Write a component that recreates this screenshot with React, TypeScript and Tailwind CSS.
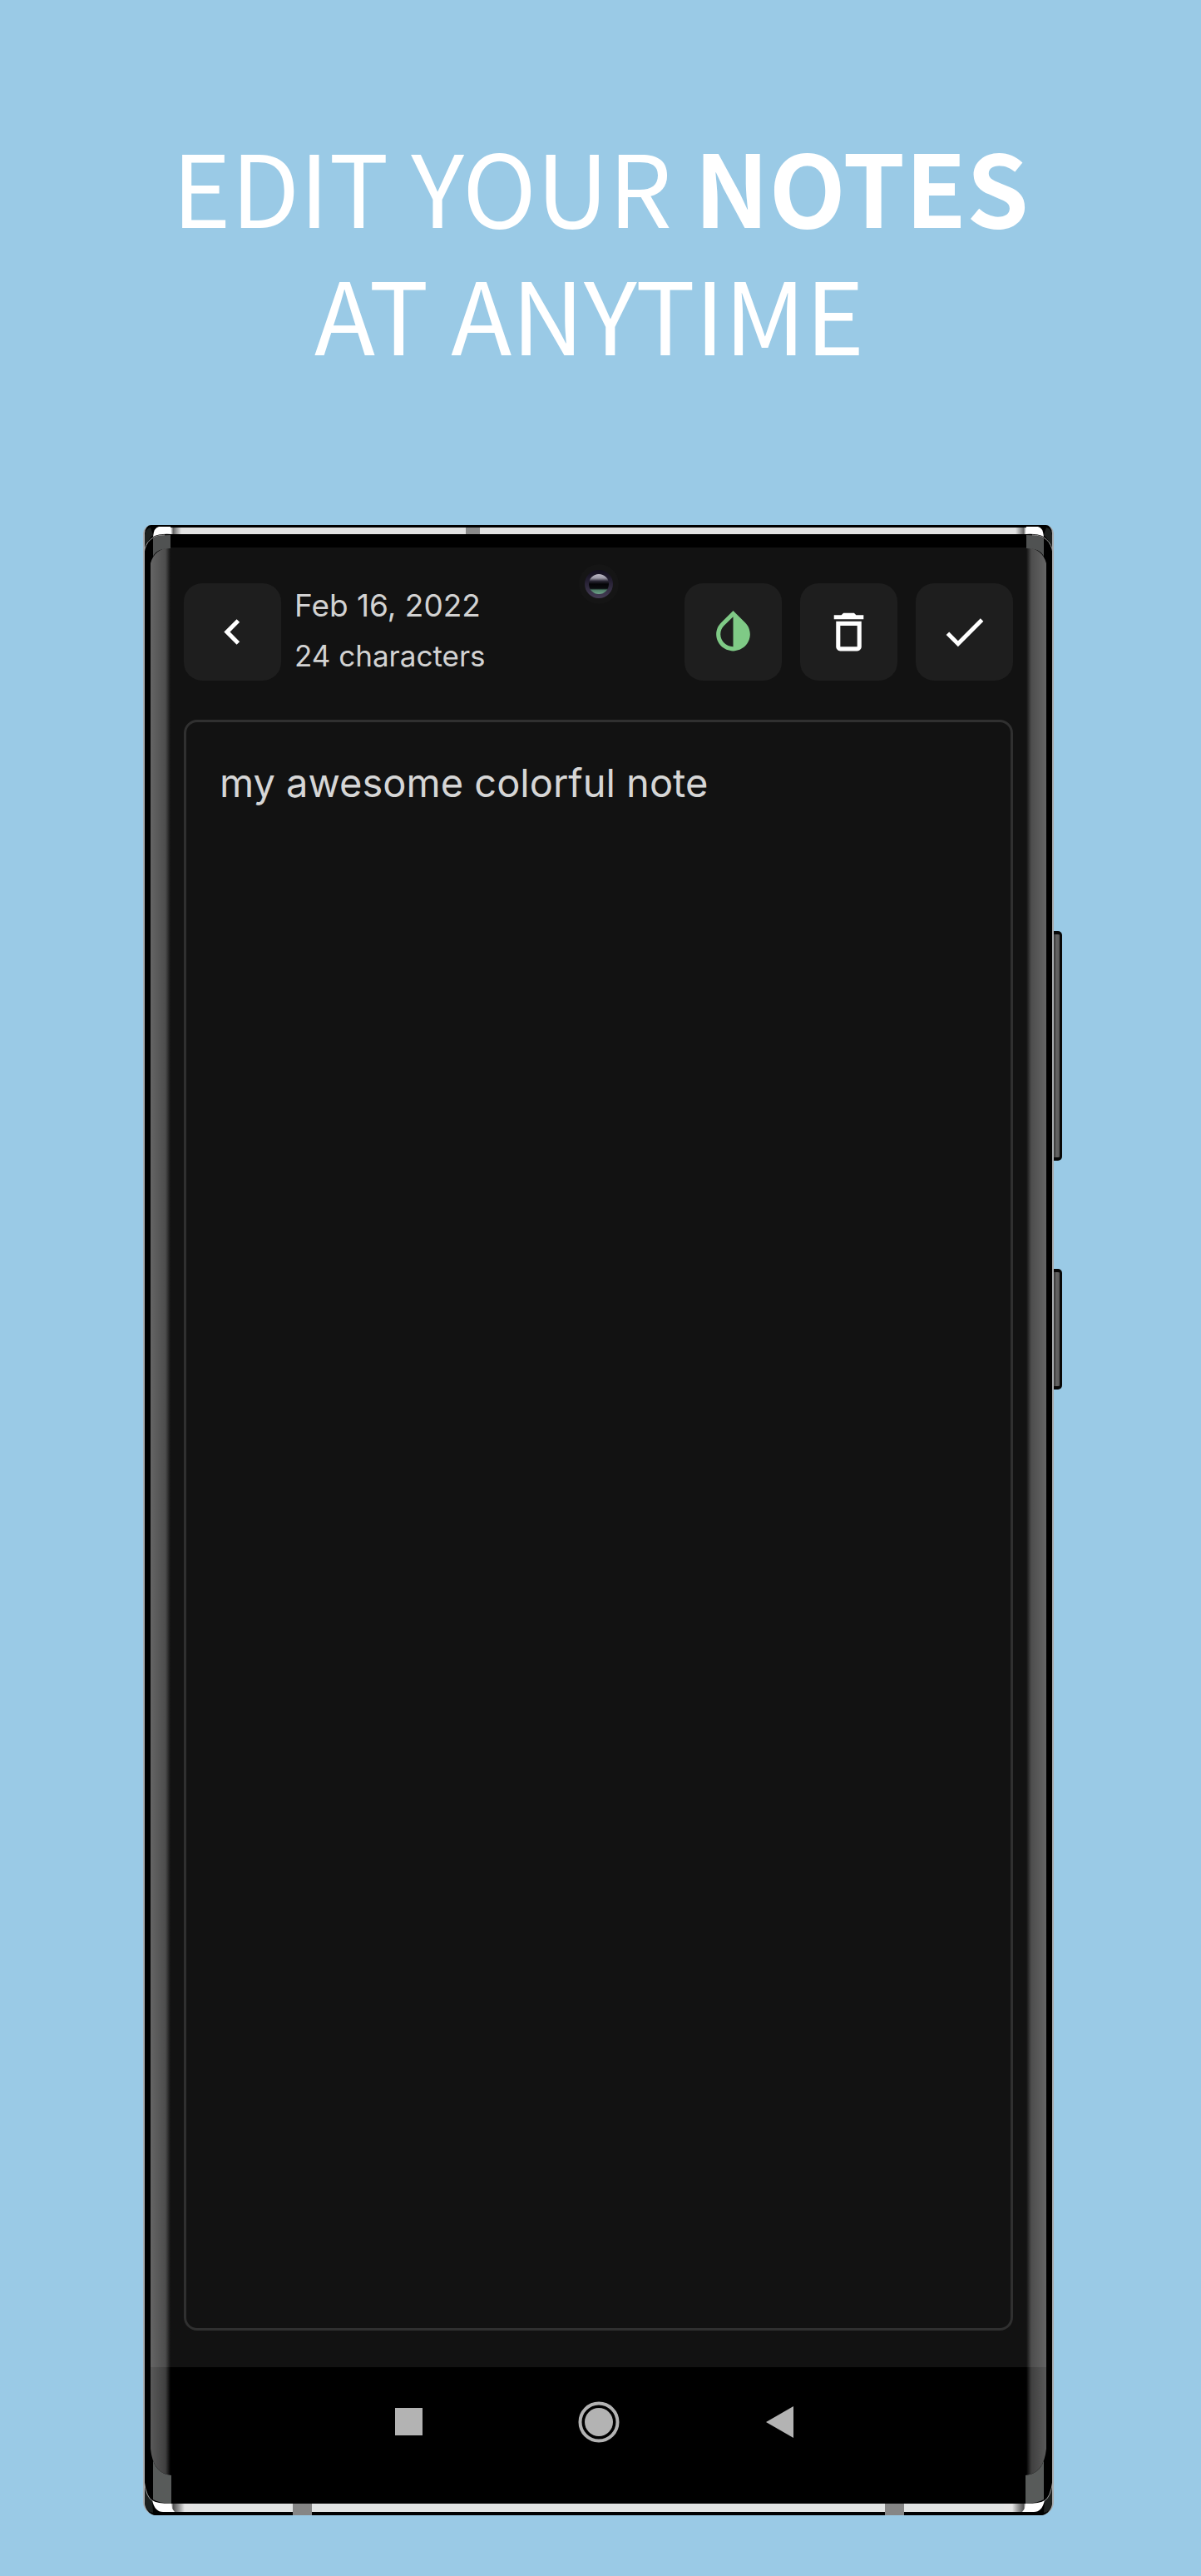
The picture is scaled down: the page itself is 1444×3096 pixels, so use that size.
import type { ReactNode } from "react";

const HEADLINE_FONT = "font-['Noto_Sans_CJK_SC',sans-serif]";

function ActionButton({ label, color, path }: { label: string; color: string; path: string }) {
  return (
    <button
      type="button"
      aria-label={label}
      className="flex size-[117px] shrink-0 items-center justify-center rounded-[22px] bg-[#1e1e1e]"
    >
      <svg viewBox="0 0 24 24" className={`size-[61px] ${color}`} fill="currentColor" aria-hidden="true">
        <path d={path} />
      </svg>
    </button>
  );
}

function NavButton({ label, children }: { label: string; children: ReactNode }) {
  return (
    <button type="button" aria-label={label} className="size-[50px] text-[#b3b3b3]">
      <svg viewBox="0 0 50 50" className="size-full" fill="currentColor" aria-hidden="true">
        {children}
      </svg>
    </button>
  );
}

function TopCorner({ id, className }: { id: string; className: string }) {
  return (
    <svg viewBox="0 0 60 60" className={`pointer-events-none absolute size-[60px] ${className}`} aria-hidden="true">
      <defs>
        <linearGradient id={id} x1="33" x2="46" y1="0" y2="0" gradientUnits="userSpaceOnUse">
          <stop offset="0" stopColor="#fff" />
          <stop offset="0.25" stopColor="#666" />
          <stop offset="0.55" stopColor="#999" />
          <stop offset="1" stopColor="#e2e2e2" />
        </linearGradient>
      </defs>
      <path d="M0 60V8Q0 0 8 0H60V11H33V27Q14 28 9 46V60Z" fill="#000" />
      <path d="M2 30V12Q3 4 9 3L12 12Q5 18 2 30Z" fill="#1d201f" />
      <path d="M33 3H60V11H33Z" fill={`url(#${id})`} />
      <path d="M12 14Q13 3 19 2H33L34 11Q20 10 12 14Z" fill="#fff" />
      <path d="M12 38V16Q18 12 33 12V28Q16 28 12 38Z" fill="#505252" />
      <path d="M1 34Q4 12 26 12" fill="none" stroke="#9a9a9a" strokeWidth="1" />
    </svg>
  );
}

function BottomCorner({ id, className }: { id: string; className: string }) {
  return (
    <svg viewBox="0 0 60 80" className={`pointer-events-none absolute h-20 w-[60px] ${className}`} aria-hidden="true">
      <defs>
        <linearGradient id={id} x1="33" x2="50" y1="0" y2="0" gradientUnits="userSpaceOnUse">
          <stop offset="0" stopColor="#fff" />
          <stop offset="0.2" stopColor="#555" />
          <stop offset="0.6" stopColor="#999" />
          <stop offset="1" stopColor="#e4e4e4" />
        </linearGradient>
      </defs>
      <path d="M0 0V72Q1 80 12 80H60V65H34V32Q12 30 9 0Z" fill="#000" />
      <path d="M2 42V66Q4 76 12 77L11 62Q4 56 2 42Z" fill="#1d201f" />
      <path d="M12 14V61Q18 65 34 66V32Q17 30 12 14Z" fill="#585b5a" />
      <path d="M34 66H60V76H34Z" fill={`url(#${id})`} />
      <path d="M11 62Q16 66 34 66L35 72L38 76H24Q14 76 11 62Z" fill="#fff" />
      <path d="M1 38Q4 60 12 63" fill="none" stroke="#9a9a9a" strokeWidth="1" />
    </svg>
  );
}

function Camera() {
  return (
    <svg
      viewBox="0 0 50 50"
      className="absolute top-[46px] left-1/2 size-[50px] -translate-x-1/2"
      aria-hidden="true"
    >
      <defs>
        <linearGradient id="lens-ring" x1="0" x2="0" y1="0" y2="1">
          <stop offset="0" stopColor="#100c1c" />
          <stop offset="1" stopColor="#453d55" />
        </linearGradient>
        <linearGradient id="lens-glass" x1="0" x2="0" y1="0" y2="1">
          <stop offset="0" stopColor="#bdbac6" />
          <stop offset="0.2" stopColor="#9a97a6" />
          <stop offset="0.35" stopColor="#2a2735" />
          <stop offset="0.5" stopColor="#050508" />
          <stop offset="0.72" stopColor="#0b0d10" />
          <stop offset="0.8" stopColor="#4d7c66" />
          <stop offset="1" stopColor="#6fa389" />
        </linearGradient>
      </defs>
      <circle cx="25" cy="25" r="24" fill="#151515" />
      <circle cx="25" cy="25" r="17" fill="url(#lens-ring)" />
      <circle cx="25" cy="25" r="12" fill="url(#lens-glass)" />
    </svg>
  );
}

function SideKey({ className }: { className: string }) {
  return (
    <div
      className={`rounded-r-[5px] border-y-4 border-r-3 border-[#080808] bg-linear-to-r from-[#333] via-[#666] to-[#555] ${className}`}
    />
  );
}

export default function App() {
  return (
    <main className="flex min-h-screen flex-col bg-[#9acae6] pb-[73px]">
      <h1
        className={`pt-[146px] pb-[179px] text-center text-[120px] leading-[153px] font-normal text-white ${HEADLINE_FONT}`}
      >
        EDIT YOUR <strong className="font-bold">NOTES</strong>
        <br />
        AT ANYTIME&nbsp;
      </h1>

      <div className="flex grow pr-[167px] pl-[172px]">
        <section
          aria-label="Note editor"
          className="relative flex grow flex-col overflow-hidden rounded-t-[10px] rounded-b-[16px] border-x-2 border-[#a9adb0] bg-black font-['Inter',sans-serif]"
        >
          <div className="mt-[3px] h-2 bg-[#e2e2e2] pl-[386px]">
            <div className="h-2 w-[17px] bg-[#8a8a8a]" />
          </div>

          <div className="mx-[7px] mt-4 flex grow flex-col bg-[#121212] px-10 pt-[43px] pb-11">
            <header className="flex h-[117px] items-center gap-[22px]">
              <ActionButton
                label="Back"
                color="text-white"
                path="M15.41 7.41 14 6l-6 6 6 6 1.41-1.41L10.83 12z"
              />
              <div className="-ml-1.5 grow pb-1 whitespace-nowrap text-[#d2d2d2]">
                <p className="text-[37px] leading-[60px]">Feb 16, 2022</p>
                <p className="text-[35px] leading-[60px]">24 characters</p>
              </div>
              <ActionButton
                label="Change color"
                color="text-[#7fca86]"
                path="M12 4.81V19c-3.31 0-6-2.63-6-5.87 0-1.56.62-3.03 1.75-4.14L12 4.81M6.35 7.56C4.9 8.99 4 10.96 4 13.13 4 17.48 7.58 21 12 21s8-3.52 8-7.87c0-2.17-.9-4.14-2.35-5.57L12 2z"
              />
              <ActionButton
                label="Delete note"
                color="text-white"
                path="M6 19c0 1.1.9 2 2 2h8c1.1 0 2-.9 2-2V7H6v12zM8 9h8v10H8V9zm7.5-5-1-1h-5l-1 1H5v2h14V4z"
              />
              <ActionButton
                label="Save note"
                color="text-white"
                path="M9 16.2 4.8 12l-1.4 1.4L9 19 21 7l-1.4-1.4z"
              />
            </header>
            <textarea
              aria-label="Note text"
              defaultValue="my awesome colorful note"
              className="mt-[47px] block w-full grow resize-none rounded-2xl border-3 border-[#303030] px-10 py-[38px] text-[47px] leading-[70px] text-[#d6d6d6] outline-none"
            />
          </div>

          <nav aria-label="System" className="flex h-[164px] justify-center gap-[173px] pt-[41px]">
            <NavButton label="Recent apps">
              <path d="M3 8H36V41H3Z" />
            </NavButton>
            <NavButton label="Home">
              <circle cx="25" cy="25" r="22.5" fill="none" stroke="currentColor" strokeWidth="4" />
              <circle cx="25" cy="25" r="17" />
            </NavButton>
            <NavButton label="Back to previous screen">
              <path d="M36 6V44L3 25Z" />
            </NavButton>
          </nav>

          <div className="mb-1 flex h-[10px] justify-between bg-[#e2e4e4] px-[178px]">
            <div className="h-[14px] w-[23px] bg-[#868686]" />
            <div className="h-[14px] w-[23px] bg-[#868686]" />
          </div>

          <div className="pointer-events-none absolute top-[27px] bottom-[48px] left-[7px] w-6 rounded-l-xl bg-linear-to-r from-white/35 via-white/25 via-75% to-white/0" />
          <div className="pointer-events-none absolute top-[27px] right-[7px] bottom-[48px] w-6 rounded-r-xl bg-linear-to-l from-white/35 via-white/25 via-75% to-white/0" />
          <TopCorner id="rim-tl" className="top-0 -left-0.5" />
          <TopCorner id="rim-tr" className="top-0 -right-0.5 -scale-x-100" />
          <BottomCorner id="rim-bl" className="bottom-0 -left-0.5" />
          <BottomCorner id="rim-br" className="-right-0.5 bottom-0 -scale-x-100" />
          <Camera />
        </section>

        <div className="flex w-[10px] flex-col pt-[488px]" aria-hidden="true">
          <SideKey className="h-[276px]" />
          <SideKey className="mt-[130px] h-[145px]" />
        </div>
      </div>
    </main>
  );
}
